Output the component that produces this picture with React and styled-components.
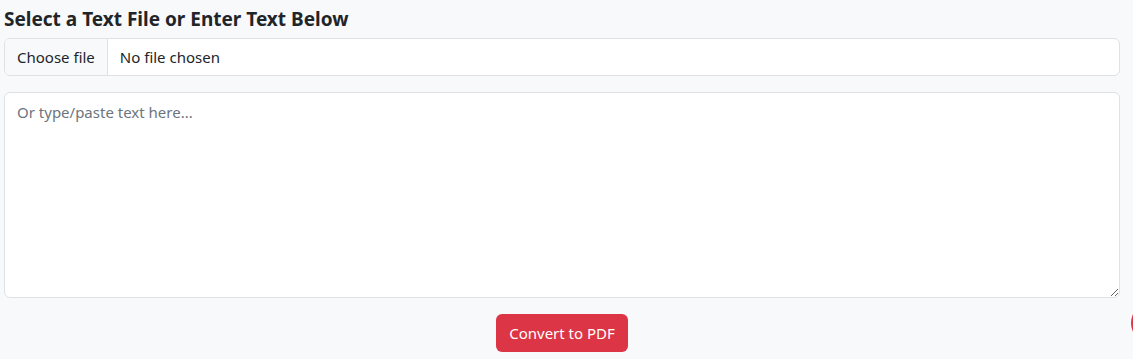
import styled, { createGlobalStyle } from "styled-components";

const GlobalStyle = createGlobalStyle`
  * { box-sizing: border-box; }
  body {
    margin: 0;
    background: #f8f9fa;
    color: #212529;
    font-family: "Noto Sans", "Liberation Sans", sans-serif;
    overflow: hidden;
  }
`;

const Page = styled.div`
  width: 1116px;
  margin-left: 4px;
  padding-top: 7px;
`;

const Heading = styled.h5`
  margin: 0 0 7px;
  font-size: 19px;
  line-height: 24px;
  font-weight: 700;
`;

const FileField = styled.label`
  display: flex;
  height: 38px;
  margin-bottom: 16px;
  background: #fff;
  border: 1px solid #dee2e6;
  border-radius: 6px;
  overflow: hidden;
  font-size: 15px;
  cursor: pointer;

  input { display: none; }
`;

const FileButton = styled.span`
  display: flex;
  align-items: center;
  padding: 0 12px;
  background: #f8f9fa;
  border-right: 1px solid #dee2e6;
`;

const FileName = styled.span`
  display: flex;
  align-items: center;
  padding: 0 12px;
`;

const TextBox = styled.textarea`
  display: block;
  width: 100%;
  height: 206px;
  margin-bottom: 16px;
  padding: 7px 12px;
  background: #fff;
  border: 1px solid #dee2e6;
  border-radius: 6px;
  font-family: inherit;
  font-size: 15px;
  line-height: 24px;
  color: #212529;
  resize: vertical;

  &::placeholder { color: #6c757d; }
`;

const Actions = styled.div`
  display: flex;
  justify-content: center;
`;

const ConvertButton = styled.button`
  height: 38px;
  padding: 0 13px;
  background: #dc3545;
  color: #fff;
  border: none;
  border-radius: 6px;
  font-family: inherit;
  font-size: 15px;
  cursor: pointer;
`;

// floating bubble peeking in from the right edge
const Bubble = styled.div`
  position: fixed;
  left: 1131px;
  top: 303px;
  width: 40px;
  height: 40px;
  border-radius: 50%;
  background: #dc3545;
`;

export default function App() {
  return (
    <>
      <GlobalStyle />
      <Page>
        <Heading>Select a Text File or Enter Text Below</Heading>
        <FileField>
          <input type="file" accept=".txt" />
          <FileButton>Choose file</FileButton>
          <FileName>No file chosen</FileName>
        </FileField>
        <TextBox placeholder="Or type/paste text here..." />
        <Actions>
          <ConvertButton>Convert to PDF</ConvertButton>
        </Actions>
      </Page>
      <Bubble />
    </>
  );
}
